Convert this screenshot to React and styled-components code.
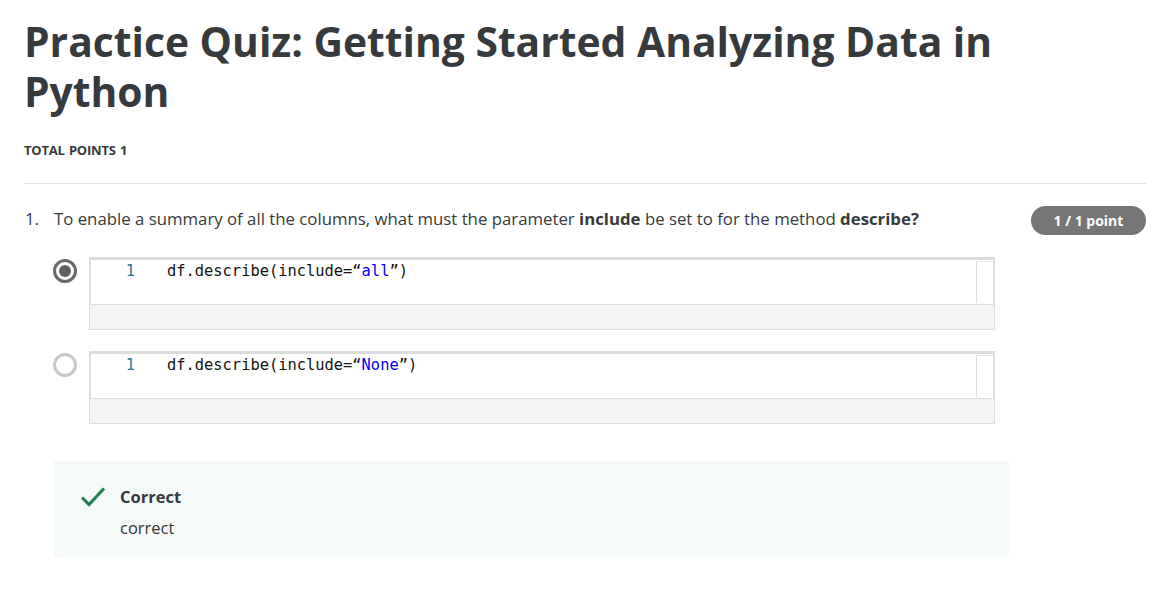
import styled, { createGlobalStyle } from 'styled-components';

const GlobalStyle = createGlobalStyle`
  body {
    margin: 0;
    background: #ffffff;
    font-family: 'Open Sans', 'Noto Sans', sans-serif;
    color: #373a3c;
  }
`;

const StyledPage = styled.main`
  width: 1122px;
  padding: 16px 29px 0 24px;
`;

const StyledTitle = styled.h1`
  margin: 0;
  max-width: 1010px;
  font-size: 40.8px;
  line-height: 50px;
  font-weight: 700;
  color: #373a3c;
`;

const StyledTotal = styled.div`
  margin-top: 24px;
  font-size: 13px;
  line-height: 20px;
  font-weight: 700;
  letter-spacing: -0.2px;
  word-spacing: 1px;
  text-transform: uppercase;
  color: #373a3c;
`;

const StyledDivider = styled.hr`
  margin: 23px 0 0;
  border: none;
  border-top: 1px solid #e1e1e1;
`;

const StyledQuestion = styled.section`
  display: flex;
  align-items: flex-start;
  margin-top: 22px;
`;

const StyledNumber = styled.div`
  width: 30px;
  flex-shrink: 0;
  padding: 1px 0 0 1px;
  box-sizing: border-box;
  font-size: 16.8px;
  line-height: 24px;
`;

const StyledBody = styled.div`
  width: 955px;
`;

const StyledPrompt = styled.p`
  margin: 0;
  padding-top: 1px;
  font-size: 16.8px;
  line-height: 24px;
  color: #373a3c;

  strong {
    font-weight: 700;
  }
`;

const StyledBadge = styled.div`
  margin-left: auto;
  width: 115px;
  height: 29px;
  border-radius: 15px;
  background-color: #767676;
  color: #ffffff;
  font-size: 14px;
  font-weight: 700;
  display: flex;
  align-items: center;
  justify-content: center;
`;

const StyledOptions = styled.div`
  display: flex;
  flex-direction: column;
  gap: 21px;
  margin-top: 26px;
`;

const StyledOption = styled.label`
  display: flex;
  align-items: flex-start;
  gap: 12px;
  margin-left: -1px;
`;

const StyledRadio = styled.span`
  margin-top: 2px;
  width: 24px;
  height: 24px;
  box-sizing: border-box;
  border-radius: 50%;
  border: 3px solid ${(props) => (props.checked ? '#6a6a6a' : '#c8c8c8')};
  display: flex;
  align-items: center;
  justify-content: center;
  flex-shrink: 0;

  &::after {
    content: '';
    width: 12px;
    height: 12px;
    border-radius: 50%;
    background-color: #606060;
    display: ${(props) => (props.checked ? 'block' : 'none')};
  }
`;

const StyledCodeBox = styled.div`
  width: 906px;
  box-sizing: border-box;
  border: 1px solid #dcdcdc;
  background-color: #f4f4f4;
`;

const StyledEditor = styled.div`
  display: flex;
  height: 47px;
  box-sizing: border-box;
  background-color: #fffffd;
  border: 1px solid #dcdcdc;
  border-top-width: 2px;
  border-bottom-width: 1px;
  font-family: 'DejaVu Sans Mono', 'Liberation Mono', monospace;
  font-size: 15.4px;
  line-height: 20px;
`;

const StyledGutter = styled.div`
  width: 54px;
  flex-shrink: 0;
  box-sizing: border-box;
  padding: 1px 10px 0 0;
  text-align: right;
  color: #237893;
`;

const StyledCode = styled.div`
  flex: 1;
  padding: 1px 0 0 22px;
  color: #111111;
  white-space: pre;

  span {
    color: #0000ff;
  }
`;

const StyledScroll = styled.div`
  width: 16px;
  margin: 1px 0;
  border-left: 1px solid #dcdcdc;
  border-top: 1px solid #ececec;
`;

const StyledFooter = styled.div`
  height: 24px;
`;

const StyledFeedback = styled.div`
  display: flex;
  gap: 14px;
  margin-top: 37px;
  padding: 24px 26px 17px;
  background-color: #f5f9f7;
`;

const StyledCheck = styled.svg`
  width: 26px;
  height: 24px;
  flex-shrink: 0;
`;

const StyledFeedbackTitle = styled.div`
  font-size: 16.5px;
  line-height: 24px;
  font-weight: 700;
  color: #373a3c;
`;

const StyledFeedbackText = styled.div`
  margin-top: 7px;
  font-size: 16.5px;
  line-height: 24px;
  color: #373a3c;
`;

const options = [
  { value: 'all', checked: true },
  { value: 'None', checked: false },
];

function CodeOption({ value, checked }) {
  return (
    <StyledOption>
      <StyledRadio checked={checked} />
      <StyledCodeBox>
        <StyledEditor>
          <StyledGutter>1</StyledGutter>
          <StyledCode>
            df.describe(include=“<span>{value}</span>”)
          </StyledCode>
          <StyledScroll />
        </StyledEditor>
        <StyledFooter />
      </StyledCodeBox>
    </StyledOption>
  );
}

export default function App() {
  return (
    <>
      <GlobalStyle />
      <StyledPage>
        <StyledTitle>
          Practice Quiz: Getting Started Analyzing Data in Python
        </StyledTitle>
        <StyledTotal>Total points 1</StyledTotal>
        <StyledDivider />
        <StyledQuestion>
          <StyledNumber>1.</StyledNumber>
          <StyledBody>
            <StyledPrompt>
              To enable a summary of all the columns, what must the parameter{' '}
              <strong>include</strong> be set to for the method{' '}
              <strong>describe?</strong>
            </StyledPrompt>
            <StyledOptions>
              {options.map((o) => (
                <CodeOption key={o.value} value={o.value} checked={o.checked} />
              ))}
            </StyledOptions>
            <StyledFeedback>
              <StyledCheck viewBox="0 0 26 24">
                <path
                  d="M2 12.5 L9 19.5 L24 3.5"
                  fill="none"
                  stroke="#1f7f4f"
                  strokeWidth="3"
                />
              </StyledCheck>
              <div>
                <StyledFeedbackTitle>Correct</StyledFeedbackTitle>
                <StyledFeedbackText>correct</StyledFeedbackText>
              </div>
            </StyledFeedback>
          </StyledBody>
          <StyledBadge>1 / 1 point</StyledBadge>
        </StyledQuestion>
      </StyledPage>
    </>
  );
}
